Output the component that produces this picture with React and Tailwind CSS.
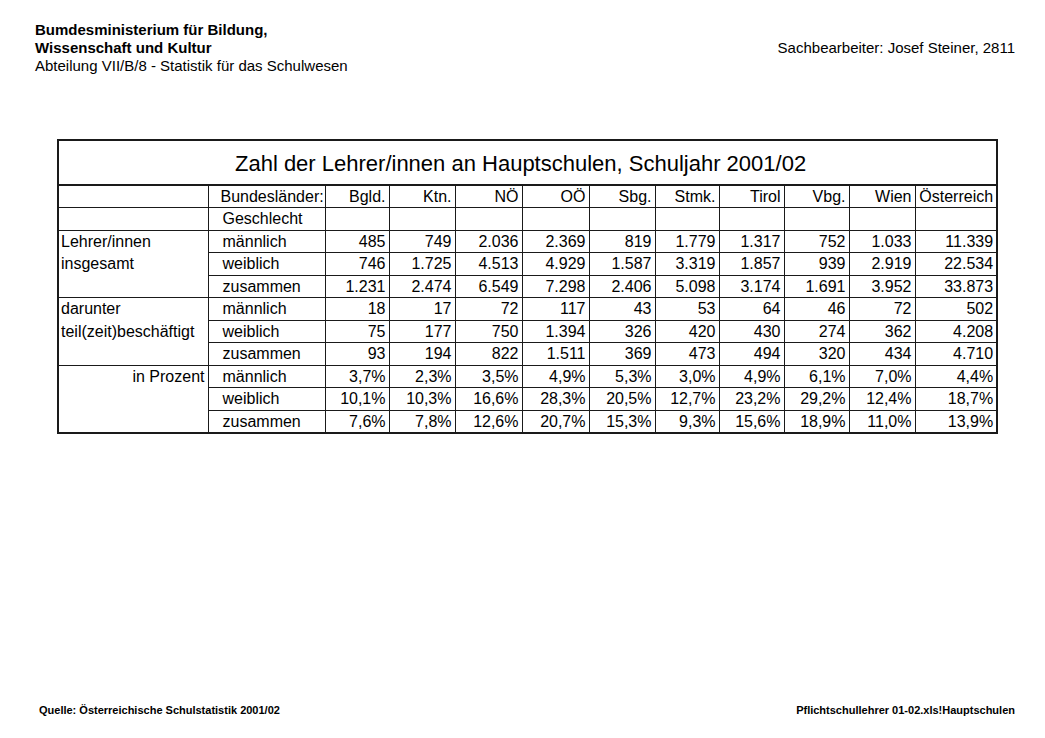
const laender = ["Bgld.", "Ktn.", "NÖ", "OÖ", "Sbg.", "Stmk.", "Tirol", "Vbg.", "Wien", "Österreich"];

const gruppen = [
  {
    label: ["Lehrer/innen", "insgesamt"],
    right: false,
    rows: [
      ["männlich", ["485", "749", "2.036", "2.369", "819", "1.779", "1.317", "752", "1.033", "11.339"]],
      ["weiblich", ["746", "1.725", "4.513", "4.929", "1.587", "3.319", "1.857", "939", "2.919", "22.534"]],
      ["zusammen", ["1.231", "2.474", "6.549", "7.298", "2.406", "5.098", "3.174", "1.691", "3.952", "33.873"]],
    ],
  },
  {
    label: ["darunter", "teil(zeit)beschäftigt"],
    right: false,
    rows: [
      ["männlich", ["18", "17", "72", "117", "43", "53", "64", "46", "72", "502"]],
      ["weiblich", ["75", "177", "750", "1.394", "326", "420", "430", "274", "362", "4.208"]],
      ["zusammen", ["93", "194", "822", "1.511", "369", "473", "494", "320", "434", "4.710"]],
    ],
  },
  {
    label: ["in Prozent"],
    right: true,
    rows: [
      ["männlich", ["3,7%", "2,3%", "3,5%", "4,9%", "5,3%", "3,0%", "4,9%", "6,1%", "7,0%", "4,4%"]],
      ["weiblich", ["10,1%", "10,3%", "16,6%", "28,3%", "20,5%", "12,7%", "23,2%", "29,2%", "12,4%", "18,7%"]],
      ["zusammen", ["7,6%", "7,8%", "12,6%", "20,7%", "15,3%", "9,3%", "15,6%", "18,9%", "11,0%", "13,9%"]],
    ],
  },
];

const widths = [150, 117, 64, 66, 67, 67, 66, 64, 65, 65, 66, 82];

const cell = "border border-[#1a1a1a] p-0 whitespace-nowrap";
const num = cell + " text-right pr-[3px]";
const geschl = cell + " text-left pl-[14px]";

export default function App() {
  return (
    <div className="relative w-[1045px] h-[738px] bg-white text-black flex flex-col font-['Liberation_Sans',Arial,sans-serif]">
      {/* kopf */}
      <header className="flex justify-between pt-[21px] pl-[35px] pr-[30px] text-[15px] leading-[18px]">
        <div>
          <div className="font-bold">Bumdesministerium für Bildung,</div>
          <div className="font-bold">Wissenschaft und Kultur</div>
          <div>Abteilung VII/B/8 - Statistik für das Schulwesen</div>
        </div>
        <div className="pt-[18px]">Sachbearbeiter: Josef Steiner, 2811</div>
      </header>

      {/* tabelle */}
      <div className="pl-[57px] pt-[64px]">
        <table className="table-fixed border-collapse border-2 border-[#1a1a1a] w-[939px] text-[16px] leading-[21px]">
          <colgroup>
            {widths.map((w, i) => (
              <col key={i} style={{ width: w }} />
            ))}
          </colgroup>
          <tbody>
            <tr className="h-[45px]">
              <td colSpan={12} className="border-b-2 border-[#1a1a1a] text-center text-[22px] pr-[14px] pt-[1px]">
                Zahl der Lehrer/innen an Hauptschulen, Schuljahr 2001/02
              </td>
            </tr>
            <tr className="h-[22.5px]">
              <td className={cell}></td>
              <td className={cell + " text-left pl-[12px]"}>Bundesländer:</td>
              {laender.map((l) => (
                <td key={l} className={num}>{l}</td>
              ))}
            </tr>
            <tr className="h-[22.5px]">
              <td className={cell}></td>
              <td className={geschl}>Geschlecht</td>
              {laender.map((l) => (
                <td key={l} className={cell}></td>
              ))}
            </tr>
            {gruppen.map((g) =>
              g.rows.map(([name, werte], ri) => (
                <tr key={g.label[0] + name} className="h-[22.5px]">
                  {ri === 0 && (
                    <td
                      rowSpan={3}
                      className={
                        cell +
                        " align-top leading-[22.5px] " +
                        (g.right ? "text-right pr-[3px]" : "text-left pl-[2px]")
                      }
                    >
                      {g.label.map((t) => (
                        <div key={t}>{t}</div>
                      ))}
                    </td>
                  )}
                  <td className={geschl}>{name}</td>
                  {werte.map((w, i) => (
                    <td key={i} className={num}>{w}</td>
                  ))}
                </tr>
              ))
            )}
          </tbody>
        </table>
      </div>

      {/* fuss */}
      <footer className="mt-auto flex justify-between pl-[39px] pr-[30px] pb-[21px] text-[11px] leading-[13px] font-bold">
        <div>Quelle: Österreichische Schulstatistik 2001/02</div>
        <div>Pflichtschullehrer 01-02.xls!Hauptschulen</div>
      </footer>
    </div>
  );
}
